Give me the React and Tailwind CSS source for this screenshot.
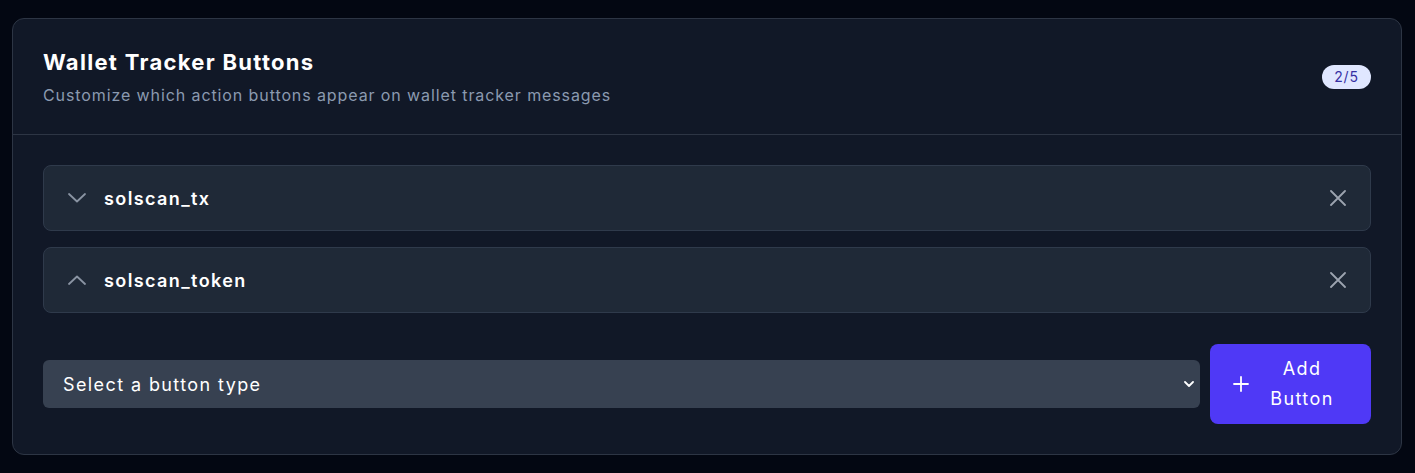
import React from "react";

const buttons = [
  { id: "solscan_tx", open: false },
  { id: "solscan_token", open: true },
];

function Chevron({ up }) {
  return (
    <svg width="18" height="10" viewBox="0 0 18 10" fill="none" className="shrink-0">
      <polyline
        points={up ? "1,9 9,1.5 17,9" : "1,1 9,8.5 17,1"}
        stroke="#8a94a3"
        strokeWidth="1.8"
        strokeLinecap="round"
        strokeLinejoin="round"
      />
    </svg>
  );
}

function ButtonRow({ item }) {
  return (
    <div className="flex items-center h-[66px] pl-[24px] pr-[24px] rounded-lg border border-[#2f3a4b] bg-[#1f2937]">
      <Chevron up={item.open} />
      <span className="ml-[18px] text-[18px] font-semibold tracking-[1.4px] text-white">{item.id}</span>
      <button className="ml-auto">
        <svg width="16" height="16" viewBox="0 0 16 16" fill="none">
          <path d="M1 1L15 15M15 1L1 15" stroke="#9ca3af" strokeWidth="1.8" strokeLinecap="round" />
        </svg>
      </button>
    </div>
  );
}

export default function App() {
  return (
    <div
      className="min-h-[473px] bg-[#030712] pt-[18px] pl-3 pr-[13px] pb-[18px]"
      style={{ fontFamily: "Inter, 'Liberation Sans', sans-serif" }}
    >
      <div className="rounded-xl border border-[#2d3544] bg-[#111827]">
        <div className="flex items-center justify-between px-[30px] pt-[28px] pb-[27px] border-b border-[#2d3544]">
          <div>
            <h2 className="text-[22px] leading-[30px] font-bold tracking-[1.3px] text-white">Wallet Tracker Buttons</h2>
            <p className="mt-[6px] text-[16px] leading-6 tracking-[0.9px] text-[#8b9ab0]">
              Customize which action buttons appear on wallet tracker messages
            </p>
          </div>
          <span className="rounded-full bg-[#e0e7ff] w-[49px] h-[24px] flex items-center justify-center text-sm tracking-[0.8px] text-[#3730a3]">
            2/5
          </span>
        </div>

        <div className="px-[30px] pt-[30px] pb-[30px]">
          <div className="flex flex-col gap-4">
            {buttons.map((b) => (
              <ButtonRow key={b.id} item={b} />
            ))}
          </div>

          <div className="mt-[31px] flex items-center gap-[10px]">
            <div className="relative flex-1">
              <select className="w-full h-[48px] appearance-none rounded-md bg-[#374151] pl-5 pr-10 text-[18px] tracking-[1.4px] text-white outline-none">
                <option>Select a button type</option>
              </select>
              <svg
                width="10"
                height="6"
                viewBox="0 0 10 6"
                fill="none"
                className="absolute right-[6px] top-1/2 -translate-y-1/2 pointer-events-none"
              >
                <polyline points="1,1 5,5 9,1" stroke="white" strokeWidth="1.8" strokeLinecap="round" strokeLinejoin="round" />
              </svg>
            </div>
            <button className="flex items-center w-[161px] h-[80px] rounded-lg bg-[#4f39f6] pl-[23px] pr-4 text-white">
              <svg width="16" height="16" viewBox="0 0 16 16" fill="none" className="shrink-0">
                <path d="M8 1V15M1 8H15" stroke="white" strokeWidth="1.8" strokeLinecap="round" />
              </svg>
              <span className="flex-1 text-center text-[18px] leading-[30px] tracking-[1.4px]">
                Add
                <br />
                Button
              </span>
            </button>
          </div>
        </div>
      </div>
    </div>
  );
}
